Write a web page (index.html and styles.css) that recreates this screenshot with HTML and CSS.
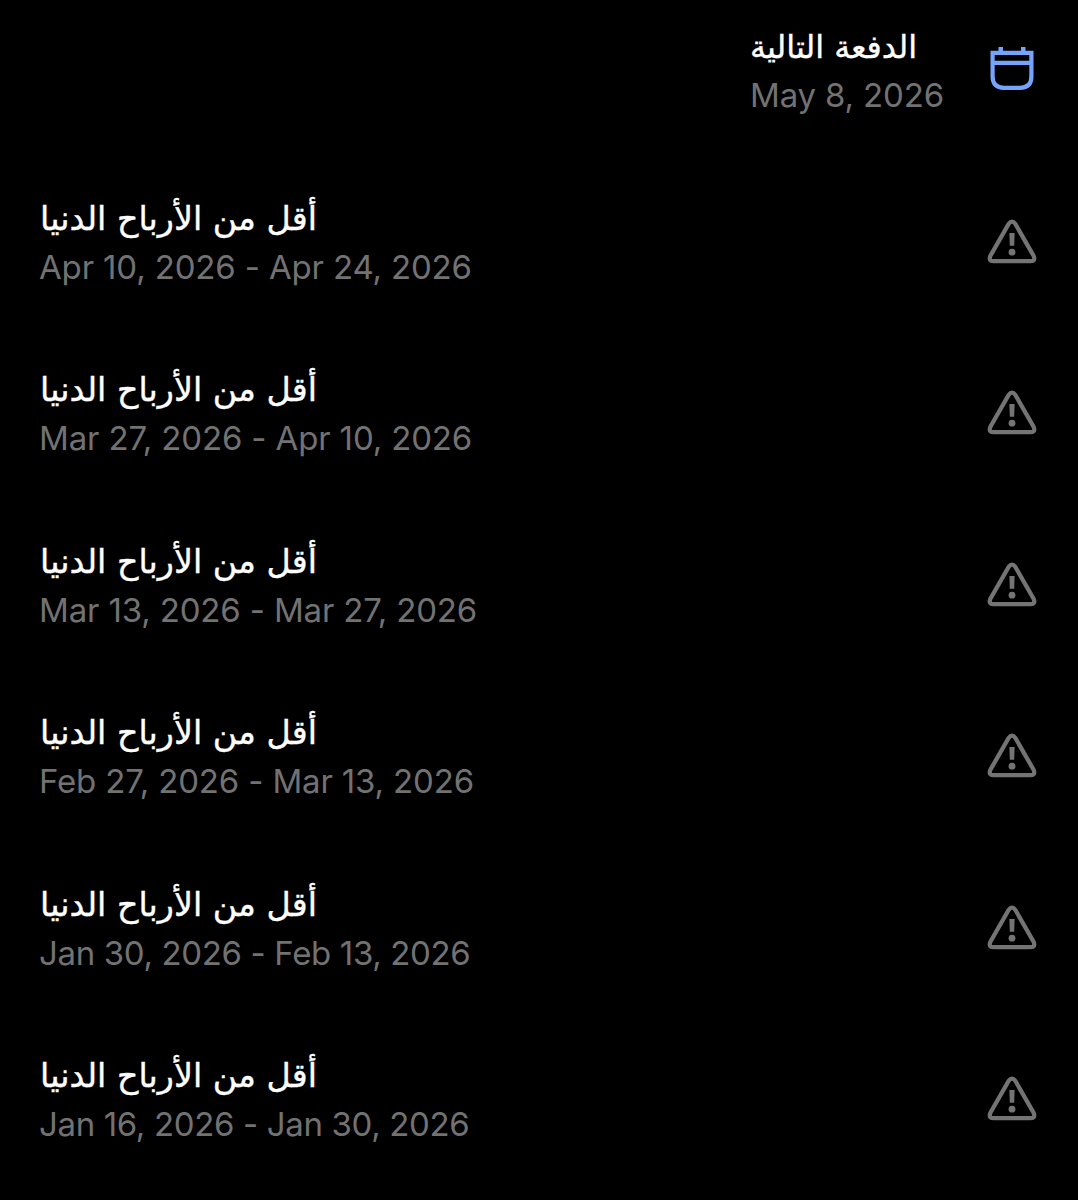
FILE: index.html
```
<!DOCTYPE html>
<html lang="ar">
<head>
    <meta charset="UTF-8">
    <title>الدفعات</title>
    <link rel="stylesheet" href="styles.css">
</head>
<body>
    <!-- Icons shared by the rows -->
    <svg class="icon-defs" width="0" height="0" aria-hidden="true">
        <symbol id="icon-warning" viewBox="0 0 52 48">
            <path d="M22.6 5 L4.4 36.8 Q2.2 42.2 7.4 42.2 H44.6 Q49.8 42.2 47.6 36.8 L29.4 5 Q26 0.3 22.6 5 Z" fill="none" stroke="currentColor" stroke-width="4.3" stroke-linejoin="round"/>
            <path d="M23.4 14 H28.6 L28.2 26.7 H23.8 Z" fill="currentColor"/>
            <circle cx="26" cy="33.2" r="3.4" fill="currentColor"/>
        </symbol>
    </svg>

    <ul class="payouts">
        <li class="payout next">
            <div class="text">
                <div class="title" dir="rtl">الدفعة التالية</div>
                <div class="date">May 8, 2026</div>
            </div>
            <svg class="icon calendar" viewBox="0 0 52 48">
                <path d="M6.6 5.9 H45.4 V29.5 Q45.4 40.8 34.1 40.8 H17.9 Q6.6 40.8 6.6 29.5 Z M6.6 15.9 H45.4" fill="none" stroke="currentColor" stroke-width="4.2"/>
                <path d="M12.5 0 H17 V5 H12.5 Z M35 0 H39.5 V5 H35 Z" fill="currentColor"/>
            </svg>
        </li>
        <li class="payout">
            <div class="text">
                <div class="title" dir="rtl">أقل من الأرباح الدنيا</div>
                <div class="date">Apr 10, 2026 - Apr 24, 2026</div>
            </div>
            <svg class="icon"><use href="#icon-warning"/></svg>
        </li>
        <li class="payout">
            <div class="text">
                <div class="title" dir="rtl">أقل من الأرباح الدنيا</div>
                <div class="date">Mar 27, 2026 - Apr 10, 2026</div>
            </div>
            <svg class="icon"><use href="#icon-warning"/></svg>
        </li>
        <li class="payout">
            <div class="text">
                <div class="title" dir="rtl">أقل من الأرباح الدنيا</div>
                <div class="date">Mar 13, 2026 - Mar 27, 2026</div>
            </div>
            <svg class="icon"><use href="#icon-warning"/></svg>
        </li>
        <li class="payout">
            <div class="text">
                <div class="title" dir="rtl">أقل من الأرباح الدنيا</div>
                <div class="date">Feb 27, 2026 - Mar 13, 2026</div>
            </div>
            <svg class="icon"><use href="#icon-warning"/></svg>
        </li>
        <li class="payout">
            <div class="text">
                <div class="title" dir="rtl">أقل من الأرباح الدنيا</div>
                <div class="date january">Jan 30, 2026 - Feb 13, 2026</div>
            </div>
            <svg class="icon"><use href="#icon-warning"/></svg>
        </li>
        <li class="payout">
            <div class="text">
                <div class="title" dir="rtl">أقل من الأرباح الدنيا</div>
                <div class="date january">Jan 16, 2026 - Jan 30, 2026</div>
            </div>
            <svg class="icon"><use href="#icon-warning"/></svg>
        </li>
    </ul>
</body>
</html>
```
FILE: styles.css
```
body {
    margin: 0;
    background: #000;
    color: #fff;
    font-family: Inter, "DejaVu Sans", sans-serif;
}

.icon-defs {
    display: block;
}

.payouts {
    display: flex;
    flex-direction: column;
    gap: 75.5px;
    height: 1200px;
    margin: 0;
    padding: 23px 40px 0;
    box-sizing: border-box;
    overflow: hidden;
    list-style: none;
}

.payout {
    display: flex;
    flex: none;
    align-items: center;
    justify-content: space-between;
    height: 96px;
}

.payout.next {
    justify-content: flex-end;
    gap: 42px;
}

.text {
    display: flex;
    flex-direction: column;
    align-items: flex-start;
    white-space: nowrap;
}

.title {
    font-family: "DejaVu Sans", sans-serif;
    font-size: 33.3px;
    line-height: 48px;
    -webkit-text-stroke: 0.4px #fff;
}

.payout.next .title {
    margin-left: -1px;
    font-size: 31.8px;
}

.date {
    margin-left: -1px;
    color: #727272;
    font-size: 33px;
    line-height: 48px;
    letter-spacing: -0.15px;
    font-feature-settings: "calt" 0;
}

.date.january {
    letter-spacing: -0.35px;
}

.icon {
    width: 52px;
    height: 48px;
    color: #747474;
}

.icon.calendar {
    color: #74a4fb;
}
```
